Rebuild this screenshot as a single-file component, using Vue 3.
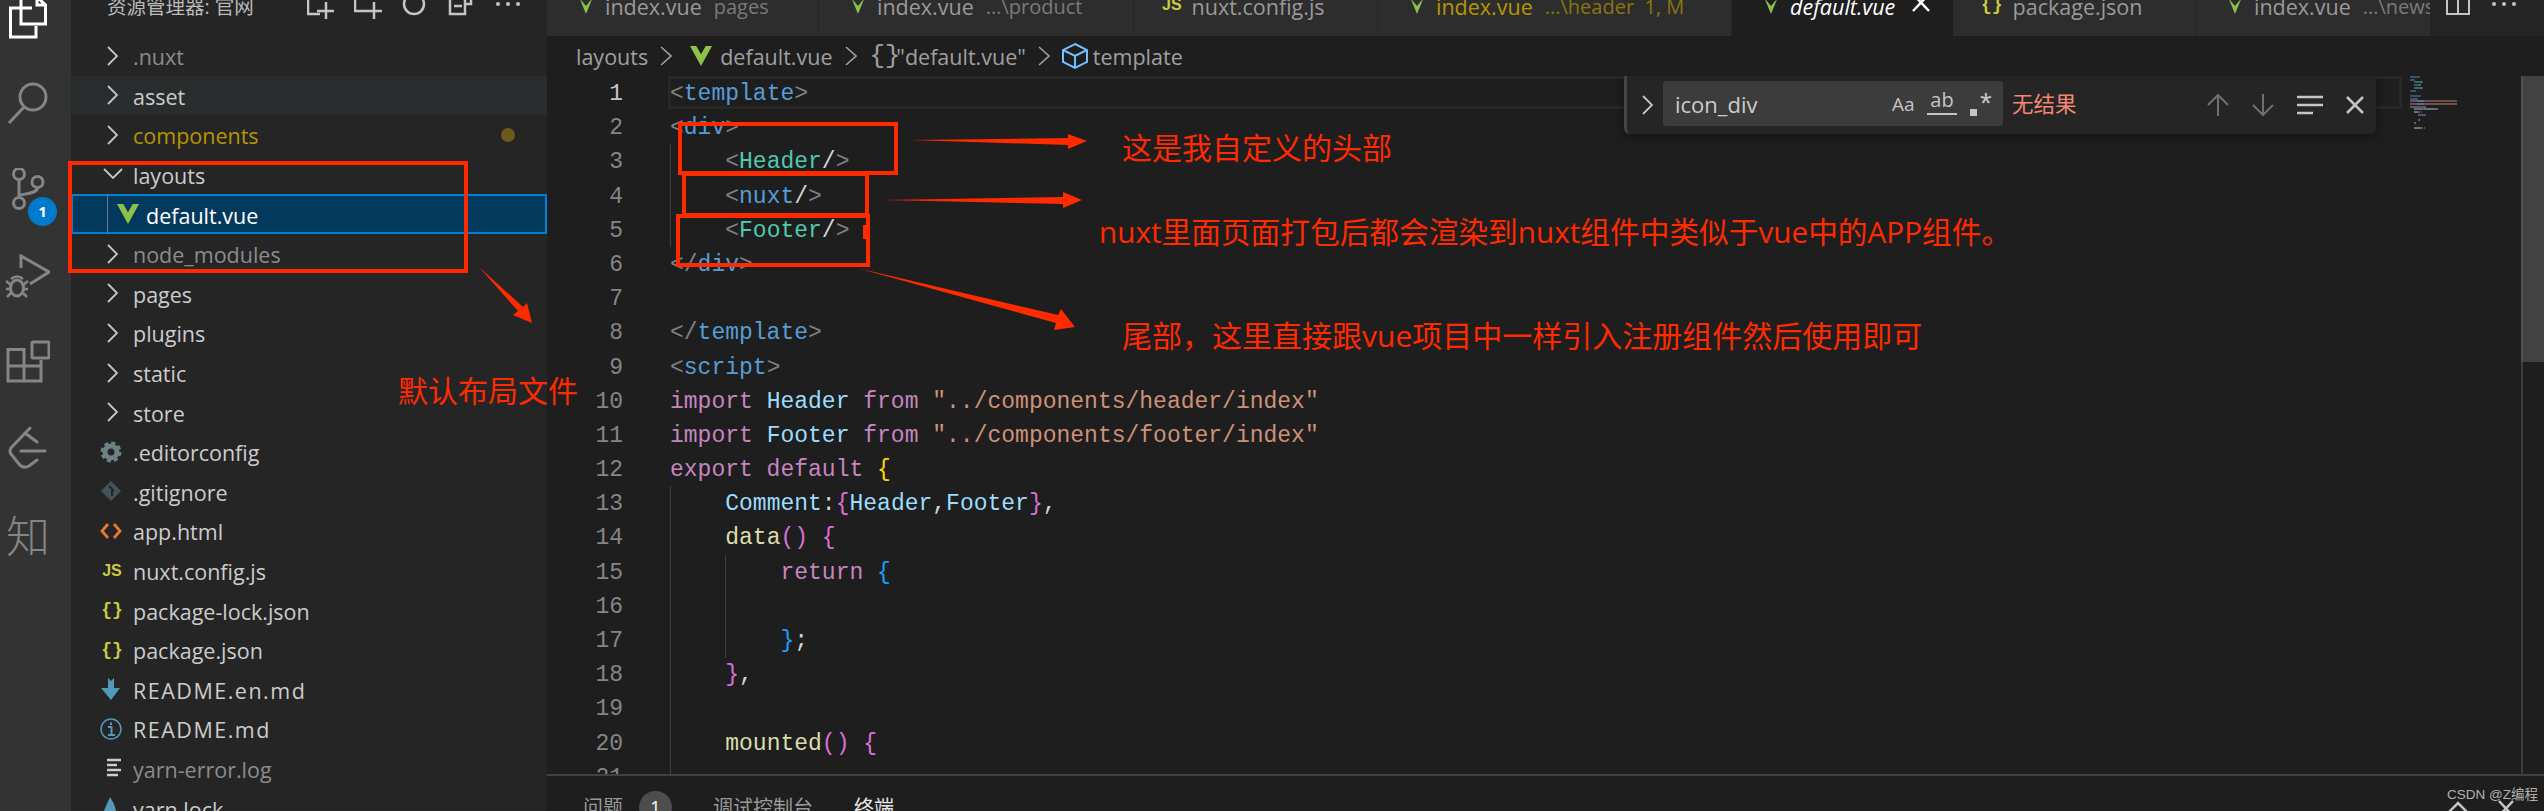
<script setup>
const rows = [
  { n: '.nuxt', k: 'dir', c: 'dim' },
  { n: 'asset', k: 'dir', c: 'hov' },
  { n: 'components', k: 'dir', c: 'mod' },
  { n: 'layouts', k: 'open' },
  { n: 'default.vue', k: 'vue', c: 'sel' },
  { n: 'node_modules', k: 'dir', c: 'dim' },
  { n: 'pages', k: 'dir' },
  { n: 'plugins', k: 'dir' },
  { n: 'static', k: 'dir' },
  { n: 'store', k: 'dir' },
  { n: '.editorconfig', k: 'gear' },
  { n: '.gitignore', k: 'git' },
  { n: 'app.html', k: 'html' },
  { n: 'nuxt.config.js', k: 'js' },
  { n: 'package-lock.json', k: 'json' },
  { n: 'package.json', k: 'json' },
  { n: 'README.en.md', k: 'down', c: 'caps' },
  { n: 'README.md', k: 'info', c: 'caps' },
  { n: 'yarn-error.log', k: 'log', c: 'dim' },
  { n: 'yarn.lock', k: 'yarn' },
]
const tabs = [
  { n: 'index.vue', d: 'pages', i: 'vue' },
  { n: 'index.vue', d: '...\\product', i: 'vue' },
  { n: 'nuxt.config.js', i: 'js' },
  { n: 'index.vue', d: '...\\header  1, M', i: 'vue', c: 'tmod' },
  { n: 'default.vue', i: 'vue', c: 'tact' },
  { n: 'package.json', i: 'json' },
  { n: 'index.vue', d: '...\\news', i: 'vue' },
]
const code = [
  [['<', 'br'], ['template', 'tag'], ['>', 'br']],
  [['<', 'br'], ['div', 'tag'], ['>', 'br']],
  [['    '], ['<', 'br'], ['Header', 'comp'], ['/', 'pl'], ['>', 'br']],
  [['    '], ['<', 'br'], ['nuxt', 'tag'], ['/', 'pl'], ['>', 'br']],
  [['    '], ['<', 'br'], ['Footer', 'comp'], ['/', 'pl'], ['>', 'br']],
  [['</', 'br'], ['div', 'tag'], ['>', 'br']],
  [],
  [['</', 'br'], ['template', 'tag'], ['>', 'br']],
  [['<', 'br'], ['script', 'tag'], ['>', 'br']],
  [['import ', 'kw'], ['Header ', 'var'], ['from ', 'kw'], ['"../components/header/index"', 'str']],
  [['import ', 'kw'], ['Footer ', 'var'], ['from ', 'kw'], ['"../components/footer/index"', 'str']],
  [['export default ', 'kw'], ['{', 'b1']],
  [['    '], ['Comment', 'var'], [':', 'pl'], ['{', 'b2'], ['Header', 'var'], [',', 'pl'], ['Footer', 'var'], ['}', 'b2'], [',', 'pl']],
  [['    '], ['data', 'fn'], ['()', 'b2'], [' '], ['{', 'b2']],
  [['        '], ['return ', 'kw'], ['{', 'b3']],
  [],
  [['        '], ['}', 'b3'], [';', 'pl']],
  [['    '], ['}', 'b2'], [',', 'pl']],
  [],
  [['    '], ['mounted', 'fn'], ['()', 'b2'], [' '], ['{', 'b2']],
  [],
]
const tint = { br: '#808080', tag: '#569cd6', comp: '#4ec9b0', pl: '#d4d4d4', kw: '#c586c0', var: '#9cdcfe', str: '#ce9178', fn: '#dcdcaa', b1: '#ffd700', b2: '#da70d6', b3: '#179fff' }
const miniBars = []
code.forEach((line, i) => {
  let col = 0
  line.forEach(([text, cls]) => {
    if (cls) miniBars.push({ left: col + 'px', top: i * 2.7 + 'px', width: text.length + 'px', background: tint[cls] })
    col += text.length
  })
})
</script>

<template>
  <div class="screen">
    <nav class="activity">
      <div class="act first">
        <svg width="44" height="44" viewBox="0 0 44 44" fill="none" stroke="#fff" stroke-width="3">
          <path d="M26 12H4.500V41H30V30" /><path d="M15 1V28H39.500V9L31 1M31 0V9H39.500" />
        </svg>
      </div>
      <div class="act">
        <svg width="44" height="44" viewBox="0 0 44 44" fill="none" stroke="#858585" stroke-width="3">
          <circle cx="27" cy="15" r="13" /><path d="M18 25L3 41" />
        </svg>
      </div>
      <div class="act">
        <svg width="44" height="44" viewBox="0 0 44 44" fill="none" stroke="#858585" stroke-width="3">
          <circle cx="13" cy="6" r="5.500" /><circle cx="31.500" cy="14" r="5.500" /><circle cx="13" cy="35" r="5.500" />
          <path d="M13 12V29M31.500 20C31 25 20 26 14 27" />
        </svg>
        <span class="badge">1</span>
      </div>
      <div class="act">
        <svg width="44" height="44" viewBox="0 0 44 44" fill="none" stroke="#858585" stroke-width="3">
          <path d="M15 14V2L43 18L24 30" />
          <ellipse cx="11" cy="34" rx="6.500" ry="8" />
          <path d="M5 25Q11 20 17 25M0 27L5 31M22 27L17 31M0 35H4.500M22 35H17.500M1 43L5 39M21 43L17 39" stroke-width="2.600" />
        </svg>
      </div>
      <div class="act">
        <svg width="44" height="44" viewBox="0 0 44 44" fill="none" stroke="#858585" stroke-width="3">
          <rect x="26" y="2" width="17" height="16" rx="1" /><path d="M2 9.500H18V41H2ZM2 26H35V41H18M35 26V20" />
        </svg>
      </div>
      <div class="act">
        <svg width="44" height="44" viewBox="0 0 44 44" fill="none" stroke="#858585" stroke-width="3" stroke-linecap="round">
          <path d="M24 2L5 22Q3 25 5 28L13 38Q17 43 23 40L31 34M19 7L31 16M15 25H39" />
        </svg>
      </div>
      <div class="act zhi">知</div>
    </nav>

    <aside class="side">
      <header class="side-head">
        <span class="side-title">资源管理器: 官网</span>
        <div class="side-actions">
          <svg width="28" height="20" viewBox="0 0 28 20" fill="none" stroke="#c5c5c5" stroke-width="2.500"><path d="M1 0V14H13M19 2V19M10 11H27" /></svg>
          <svg width="28" height="20" viewBox="0 0 28 20" fill="none" stroke="#c5c5c5" stroke-width="2.500"><path d="M1 0V11H13M20 2V19M11 11H28" /></svg>
          <svg width="28" height="20" viewBox="0 0 28 20" fill="none" stroke="#c5c5c5" stroke-width="2.500"><circle cx="13" cy="4" r="10" /></svg>
          <svg width="28" height="20" viewBox="0 0 28 20" fill="none" stroke="#c5c5c5" stroke-width="2.500"><path d="M2 0V14H17V0M6 6H14M17 4H23V0" /></svg>
          <svg width="28" height="20" viewBox="0 0 28 20" fill="#c5c5c5"><circle cx="3" cy="4" r="2" /><circle cx="13" cy="4" r="2" /><circle cx="23" cy="4" r="2" /></svg>
        </div>
      </header>
      <ul class="tree">
        <li v-for="r in rows" :key="r.n" class="row" :class="r.c">
          <span class="ic" :class="{ nest: r.k === 'vue' }">
            <svg v-if="r.k === 'dir'" width="24" height="24" viewBox="0 0 24 24" fill="none" stroke="#c5c5c5" stroke-width="1.800"><path d="M8 3L17 12L8 21" /></svg>
            <svg v-else-if="r.k === 'open'" width="24" height="24" viewBox="0 0 24 24" fill="none" stroke="#c5c5c5" stroke-width="1.800"><path d="M4 6L13 15L22 6" /></svg>
            <svg v-else-if="r.k === 'vue'" width="24" height="24" viewBox="0 0 24 24"><path d="M1 2H7.500L12 10L16.500 2H23L12 22Z" fill="#8dc149" /><path d="M7.500 2H10L12 6L14 2H16.500L12 10Z" fill="#04395e" /></svg>
            <svg v-else-if="r.k === 'gear'" width="24" height="24" viewBox="0 0 24 24" fill="none" stroke="#6d8086"><circle cx="11" cy="12" r="6" stroke-width="5" /><circle cx="11" cy="12" r="9" stroke-width="3" stroke-dasharray="4 3.070" /></svg>
            <svg v-else-if="r.k === 'git'" width="24" height="24" viewBox="0 0 24 24"><path d="M11 2L21 12L11 22L1 12Z" fill="#41535b" /><path d="M9 7L14 12M12 10V17" stroke="#252526" stroke-width="2" /></svg>
            <svg v-else-if="r.k === 'html'" width="24" height="24" viewBox="0 0 24 24" fill="none" stroke="#e37933" stroke-width="2.800"><path d="M8 5L2 12L8 19M14 5L20 12L14 19" /></svg>
            <span v-else-if="r.k === 'js'" class="jsg">JS</span>
            <span v-else-if="r.k === 'json'" class="jsn">{}</span>
            <svg v-else-if="r.k === 'down'" width="24" height="24" viewBox="0 0 24 24"><path d="M8 1L11 4L14 1V11H20L11 23L1 11H8Z" fill="#519aba" /></svg>
            <svg v-else-if="r.k === 'info'" width="24" height="24" viewBox="0 0 24 24" fill="none" stroke="#519aba" stroke-width="1.500"><circle cx="11" cy="12" r="10" /><path d="M8 10H11.500V18M8 18H15M11 5.500V8" stroke-width="2" /></svg>
            <svg v-else-if="r.k === 'log'" width="24" height="24" viewBox="0 0 24 24" fill="none" stroke="#cccccc" stroke-width="2.400"><path d="M7 4H21M7 9H17M7 14H21M7 19H18" /></svg>
            <svg v-else width="24" height="24" viewBox="0 0 24 24"><path d="M10 1L14 8L17 18L9 22L3 17L6 10Z" fill="#519aba" /></svg>
          </span>
          <span class="label">{{ r.n }}</span>
          <i v-if="r.c === 'mod'" class="dot"></i>
        </li>
      </ul>
    </aside>

    <main class="main">
      <div class="tabs">
        <div class="tablist">
          <div v-for="(t, i) in tabs" :key="i" class="tab" :class="t.c">
            <svg v-if="t.i === 'vue'" class="tab-ic" width="18" height="14" viewBox="0 0 18 14"><path d="M0 -8H18L9 14Z" fill="#8dc149" /><path d="M4 0H14L9 6Z" fill="#2d2d2d" /></svg>
            <span v-else-if="t.i === 'js'" class="jsg tab-g">JS</span>
            <span v-else class="jsn tab-g">{}</span>
            <span class="tab-n">{{ t.n }}</span>
            <span v-if="t.d" class="tab-d">{{ t.d }}</span>
            <svg v-if="t.c === 'tact'" class="tab-x" width="18" height="14" viewBox="0 0 18 14" fill="none" stroke="#fff" stroke-width="2.500"><path d="M1 -6L17 11M17 -6L1 11" /></svg>
          </div>
        </div>
        <div class="tab-actions">
          <svg width="26" height="16" viewBox="0 0 26 16" fill="none" stroke="#c5c5c5" stroke-width="2"><path d="M2 -2V14H24V-2M13 -2V14" /></svg>
          <svg width="28" height="16" viewBox="0 0 28 16" fill="#c5c5c5"><circle cx="3" cy="4" r="2" /><circle cx="13" cy="4" r="2" /><circle cx="23" cy="4" r="2" /></svg>
        </div>
      </div>

      <div class="crumbs">
        <span>layouts</span>
        <svg class="chev" width="12" height="22" viewBox="0 0 12 22" fill="none" stroke="#a0a0a0" stroke-width="1.600"><path d="M1 2L11 11L1 20" /></svg>
        <svg class="c-vue" width="24" height="24" viewBox="0 0 24 24"><path d="M1 2H7.500L12 10L16.500 2H23L12 22Z" fill="#8dc149" /><path d="M7.500 2H10L12 6L14 2H16.500L12 10Z" fill="#1e1e1e" /></svg>
        <span>default.vue</span>
        <svg class="chev" width="12" height="22" viewBox="0 0 12 22" fill="none" stroke="#a0a0a0" stroke-width="1.600"><path d="M1 2L11 11L1 20" /></svg>
        <span class="c-br">{ }</span>
        <span>"default.vue"</span>
        <svg class="chev" width="12" height="22" viewBox="0 0 12 22" fill="none" stroke="#a0a0a0" stroke-width="1.600"><path d="M1 2L11 11L1 20" /></svg>
        <svg class="c-cube" width="28" height="28" viewBox="0 0 28 28" fill="none" stroke="#75beff" stroke-width="2"><path d="M14 2L26 8V20L14 26L2 20V8ZM2 8L14 14L26 8M14 14V26" /></svg>
        <span>template</span>
      </div>

      <div class="editor">
        <div class="gutter">
          <div v-for="(l, i) in code" :key="i" class="ln" :class="{ cur: i === 0 }">{{ i + 1 }}</div>
        </div>
        <div class="code">
          <div class="cur-line"></div>
          <i class="guide g1"></i><i class="guide g2"></i><i class="guide g3"></i>
          <div v-for="(l, i) in code" :key="i" class="cl"><span v-for="(s, j) in l" :key="j" :class="s[1]">{{ s[0] }}</span></div>
        </div>

        <div class="minimap">
          <i v-for="(b, i) in miniBars" :key="i" class="mb" :style="b"></i>
        </div>
        <div class="track"></div>
        <div class="slider"></div>

        <div class="find">
          <svg class="f-chev" width="12" height="20" viewBox="0 0 12 20" fill="none" stroke="#c5c5c5" stroke-width="1.800"><path d="M1 1L10 10L1 19" /></svg>
          <div class="f-input">
            <span class="f-text">icon_div</span>
            <span class="f-aa">Aa</span>
            <span class="f-ab">ab</span>
            <span class="f-re"><i></i>*</span>
          </div>
          <span class="f-none">无结果</span>
          <div class="f-btns">
            <svg width="24" height="24" viewBox="0 0 24 24" fill="none" stroke="#6f6f6f" stroke-width="2"><path d="M12 23V2M2 12L12 2L22 12" /></svg>
            <svg width="24" height="24" viewBox="0 0 24 24" fill="none" stroke="#6f6f6f" stroke-width="2"><path d="M12 1V22M2 12L12 22L22 12" /></svg>
            <svg width="28" height="24" viewBox="0 0 28 24" fill="none" stroke="#c5c5c5" stroke-width="2.500"><path d="M1 4H27M1 12H27M1 20H17" /></svg>
            <svg width="20" height="24" viewBox="0 0 20 24" fill="none" stroke="#c5c5c5" stroke-width="2.500"><path d="M2 4L18 20M18 4L2 20" /></svg>
          </div>
        </div>
      </div>

      <div class="panel">
        <span class="p-tab">问题</span>
        <span class="p-badge">1</span>
        <span class="p-tab p2">调试控制台</span>
        <span class="p-tab p3">终端</span>
        <svg class="p-up" width="20" height="14" viewBox="0 0 20 14" fill="none" stroke="#c5c5c5" stroke-width="2.500"><path d="M1 12L10 3L19 12" /></svg>
        <svg class="p-x" width="18" height="16" viewBox="0 0 18 16" fill="none" stroke="#c5c5c5" stroke-width="2.500"><path d="M2 1L16 16M16 1L2 16" /></svg>
      </div>
    </main>

    <!-- red hand-drawn annotations on top of the screenshot -->
    <i class="box b-layouts"></i>
    <i class="box b-a"></i>
    <i class="box b-b"></i>
    <i class="box b-c"></i>
    <i class="blip"></i>
    <svg class="ink" width="2544" height="811" viewBox="0 0 2544 811" fill="#ff2a00">
      <path d="M910 140L1068 138V134L1087 141L1068 149V145Z" />
      <path d="M884 200L1063 197V192L1082 200L1063 208V204Z" />
      <path d="M857 268L1058 315L1061 309L1075 327L1054 330L1056 323Z" />
      <path d="M479 267L523 307L527 303L532 323L513 315L518 311Z" />
    </svg>
    <span class="note n1">这是我自定义的头部</span>
    <span class="note n2">nuxt里面页面打包后都会渲染到nuxt组件中类似于vue中的APP组件。</span>
    <span class="note n3">尾部，这里直接跟vue项目中一样引入注册组件然后使用即可</span>
    <span class="note n4">默认布局文件</span>
    <span class="mark">CSDN @Z编程</span>
  </div>
</template>

<style>
html, body { margin: 0; background: #1e1e1e; }
</style>

<style scoped>
.screen {
  position: relative;
  display: flex;
  width: 2544px;
  height: 811px;
  overflow: hidden;
  font-family: "Open Sans", "Noto Sans CJK SC", sans-serif;
  font-size: 21.5px;
  color: #cccccc;
  background: #1e1e1e;
}

/* activity bar */
.activity { flex: 0 0 71px; background: #333333; overflow: hidden; padding-left: 6px; box-sizing: border-box; }
.act { position: relative; display: flex; align-items: center; height: 86px; }
.act.first { margin-top: -25px; }
.badge {
  position: absolute; left: 22px; top: 50px; width: 29px; height: 29px; border-radius: 50%;
  background: #007acc; color: #fff; font-size: 15px; font-weight: 700; line-height: 29px; text-align: center;
}
.zhi { font-size: 44px; font-weight: 300; color: #858585; }

/* sidebar */
.side { flex: 0 0 476px; background: #252526; overflow: hidden; }
.side-head { display: flex; height: 36px; padding-left: 36px; overflow: hidden; }
.side-title { font-size: 19.500px; line-height: 14px; color: #bbbbbb; white-space: nowrap; }
.side-actions { display: flex; gap: 19px; position: absolute; left: 307px; top: 0; }
.tree { list-style: none; margin: 0; padding: 0; }
.row { position: relative; display: flex; align-items: center; height: 39.6px; padding-left: 29px; box-sizing: border-box; white-space: nowrap; }
.ic { display: flex; align-items: center; justify-content: center; flex: 0 0 24px; width: 24px; margin-right: 9px; }
.ic.nest { margin-left: 16px; margin-right: 6px; }
.label { padding-top: 2px; }
.caps .label { letter-spacing: 1.5px; }
.dim .label { color: #8c8c8c; }
.hov { background: #2a2d2e; }
.mod .label { color: #b89500; }
.sel { background: #04395e; outline: 2px solid #007fd4; outline-offset: -2px; color: #fff; }
.sel::before { content: ""; position: absolute; left: 36px; top: 0; bottom: 0; width: 1px; background: #6a7a88; }
.dot { position: absolute; left: 430px; top: 13px; width: 14px; height: 14px; border-radius: 50%; background: #6b5a1a; }
.jsg { font-family: "Liberation Sans", sans-serif; font-weight: 700; font-size: 16px; color: #cbcb41; }
.jsn { font-family: "Liberation Mono", monospace; font-weight: 700; font-size: 18px; color: #cbcb41; }

/* main */
.main { position: relative; flex: 1; display: flex; flex-direction: column; min-width: 0; }
.tabs { position: relative; flex: 0 0 36px; display: flex; background: #252526; overflow: hidden; }
.tablist { display: grid; grid-template-columns: 272px 315px 244px 354px 221px 243px 235px; }
.tab { display: flex; align-items: flex-start; height: 36px; padding-left: 28px; box-sizing: border-box; background: #2d2d2d; border-right: 1px solid #252526; line-height: 14px; color: #9a9a9a; overflow: hidden; white-space: nowrap; }
.tab-ic { flex: none; margin-right: 10px; margin-left: 2px; }
.tab-g { margin-right: 10px; line-height: 10px; }
.tab-d { margin-left: 12px; color: #7a7a7a; font-size: 20px; white-space: pre; }
.tmod .tab-n { color: #b89500; }
.tmod .tab-d { color: #8a7510; }
.tact { background: #1e1e1e; color: #fff; font-style: italic; border-right: 0; }
.tact .tab-ic path:last-child { fill: #1e1e1e; }
.tab-x { margin-left: 17px; }
.tab-actions { display: flex; gap: 20px; margin-left: 14px; }

.crumbs { flex: 0 0 40px; display: flex; align-items: center; padding-left: 29px; color: #a0a0a0; white-space: nowrap; }
.chev { margin: 0 13px 0 12px; }
.c-vue { margin: 0 7px 0 4px; }
.c-br { font-family: "Liberation Mono", monospace; font-size: 26px; letter-spacing: -8px; margin-right: 4px; }
.c-cube { margin: 0 4px 0 -2px; }

.editor { position: relative; flex: 1; display: flex; overflow: hidden; }
.gutter { flex: 0 0 76px; text-align: right; }
.ln, .cl { height: 34.2px; line-height: 37px; font-family: "Liberation Mono", monospace; font-size: 23px; white-space: pre; }
.ln { color: #858585; }
.ln.cur { color: #c6c6c6; }
.code { position: relative; flex: 1; padding-left: 47px; }
.cur-line { position: absolute; left: 45px; right: 142px; top: 0; height: 33px; box-sizing: border-box; border: 3px solid #282828; }
.guide { position: absolute; width: 1px; background: #404040; }
.g1 { left: 47px; top: 68px; height: 103px; }
.g2 { left: 47px; top: 410px; height: 288px; }
.g3 { left: 102px; top: 479px; height: 103px; }
.br { color: #808080; }
.tag { color: #569cd6; }
.comp { color: #4ec9b0; }
.pl { color: #d4d4d4; }
.kw { color: #c586c0; }
.var { color: #9cdcfe; }
.str { color: #ce9178; }
.fn { color: #dcdcaa; }
.b1 { color: #ffd700; }
.b2 { color: #da70d6; }
.b3 { color: #179fff; }

.minimap { position: absolute; left: 1863px; top: 0; width: 60px; height: 70px; }
.mb { position: absolute; height: 2px; opacity: 0.45; }
.track { position: absolute; left: 1974px; top: 0; bottom: 0; width: 2px; background: #3c3c3c; }
.slider { position: absolute; right: 0; top: 0; width: 23px; height: 286px; box-sizing: border-box; background: #424242; border-left: 2px solid #505050; }

.find {
  position: absolute; left: 1077px; top: 0; width: 752px; height: 58px; box-sizing: border-box;
  display: flex; align-items: flex-start; background: #252526; border-left: 3px solid #454545;
  border-radius: 0 0 6px 6px; box-shadow: 0 2px 8px rgba(0, 0, 0, 0.4);
}
.f-chev { margin: 19px 0 0 15px; }
.f-input { position: relative; display: flex; align-items: center; width: 340px; height: 45px; margin: 5px 0 0 9px; background: #3c3c3c; border-radius: 3px; }
.f-text { margin-left: 12px; font-size: 22px; color: #cccccc; }
.f-aa { position: absolute; left: 229px; font-size: 19px; color: #c5c5c5; }
.f-ab { position: absolute; left: 264px; top: 8px; font-size: 20px; line-height: 22px; height: 24px; width: 30px; text-align: center; color: #c5c5c5; border-bottom: 2px solid #c5c5c5; }
.f-re { position: absolute; left: 307px; top: 4px; font-size: 30px; line-height: 36px; color: #c5c5c5; font-family: "Liberation Sans", sans-serif; padding-left: 10px; }
.f-re i { position: absolute; left: 0; top: 24px; width: 7px; height: 7px; background: #c5c5c5; }
.f-none { margin: 11px 0 0 9px; font-size: 21.500px; color: #f48771; }
.f-btns { position: absolute; left: 579px; top: 17px; display: flex; gap: 21px; }

.panel { position: relative; flex: 0 0 37px; border-top: 2px solid #414141; box-sizing: border-box; display: flex; align-items: center; overflow: hidden; font-size: 20px; color: #9a9a9a; }
.p-tab { position: absolute; left: 36px; top: 18px; line-height: 28px; white-space: nowrap; }
.p-badge { position: absolute; left: 92px; top: 15px; width: 33px; height: 33px; border-radius: 50%; background: #4d4d4d; color: #fff; text-align: center; line-height: 33px; font-size: 18px; }
.p2 { left: 166px; }
.p3 { left: 307px; color: #e7e7e7; }
.p-up { position: absolute; left: 1901px; top: 24px; }
.p-x { position: absolute; left: 1950px; top: 24px; }

/* annotations */
.box { position: absolute; box-sizing: border-box; border: 4px solid #ff2a00; }
.b-layouts { left: 68px; top: 161px; width: 400px; height: 112px; }
.b-a { left: 678px; top: 122px; width: 220px; height: 53px; }
.b-b { left: 682px; top: 172px; width: 187px; height: 45px; }
.b-c { left: 676px; top: 214px; width: 194px; height: 53px; }
.blip { position: absolute; left: 863px; top: 225px; width: 4px; height: 14px; background: #ff2a00; }
.ink { position: absolute; left: 0; top: 0; pointer-events: none; }
.note { position: absolute; font-size: 30px; line-height: 40px; color: #ff2a00; white-space: nowrap; }
.n1 { left: 1122px; top: 128px; }
.n2 { left: 1099px; top: 212px; font-size: 29.700px; }
.n3 { left: 1122px; top: 316px; }
.n4 { left: 398px; top: 371px; }
.mark { position: absolute; left: 2447px; top: 785px; font-family: "Liberation Sans", "Noto Sans CJK SC", sans-serif; font-size: 13.500px; line-height: 20px; color: #b0b0b0; white-space: nowrap; }
</style>
